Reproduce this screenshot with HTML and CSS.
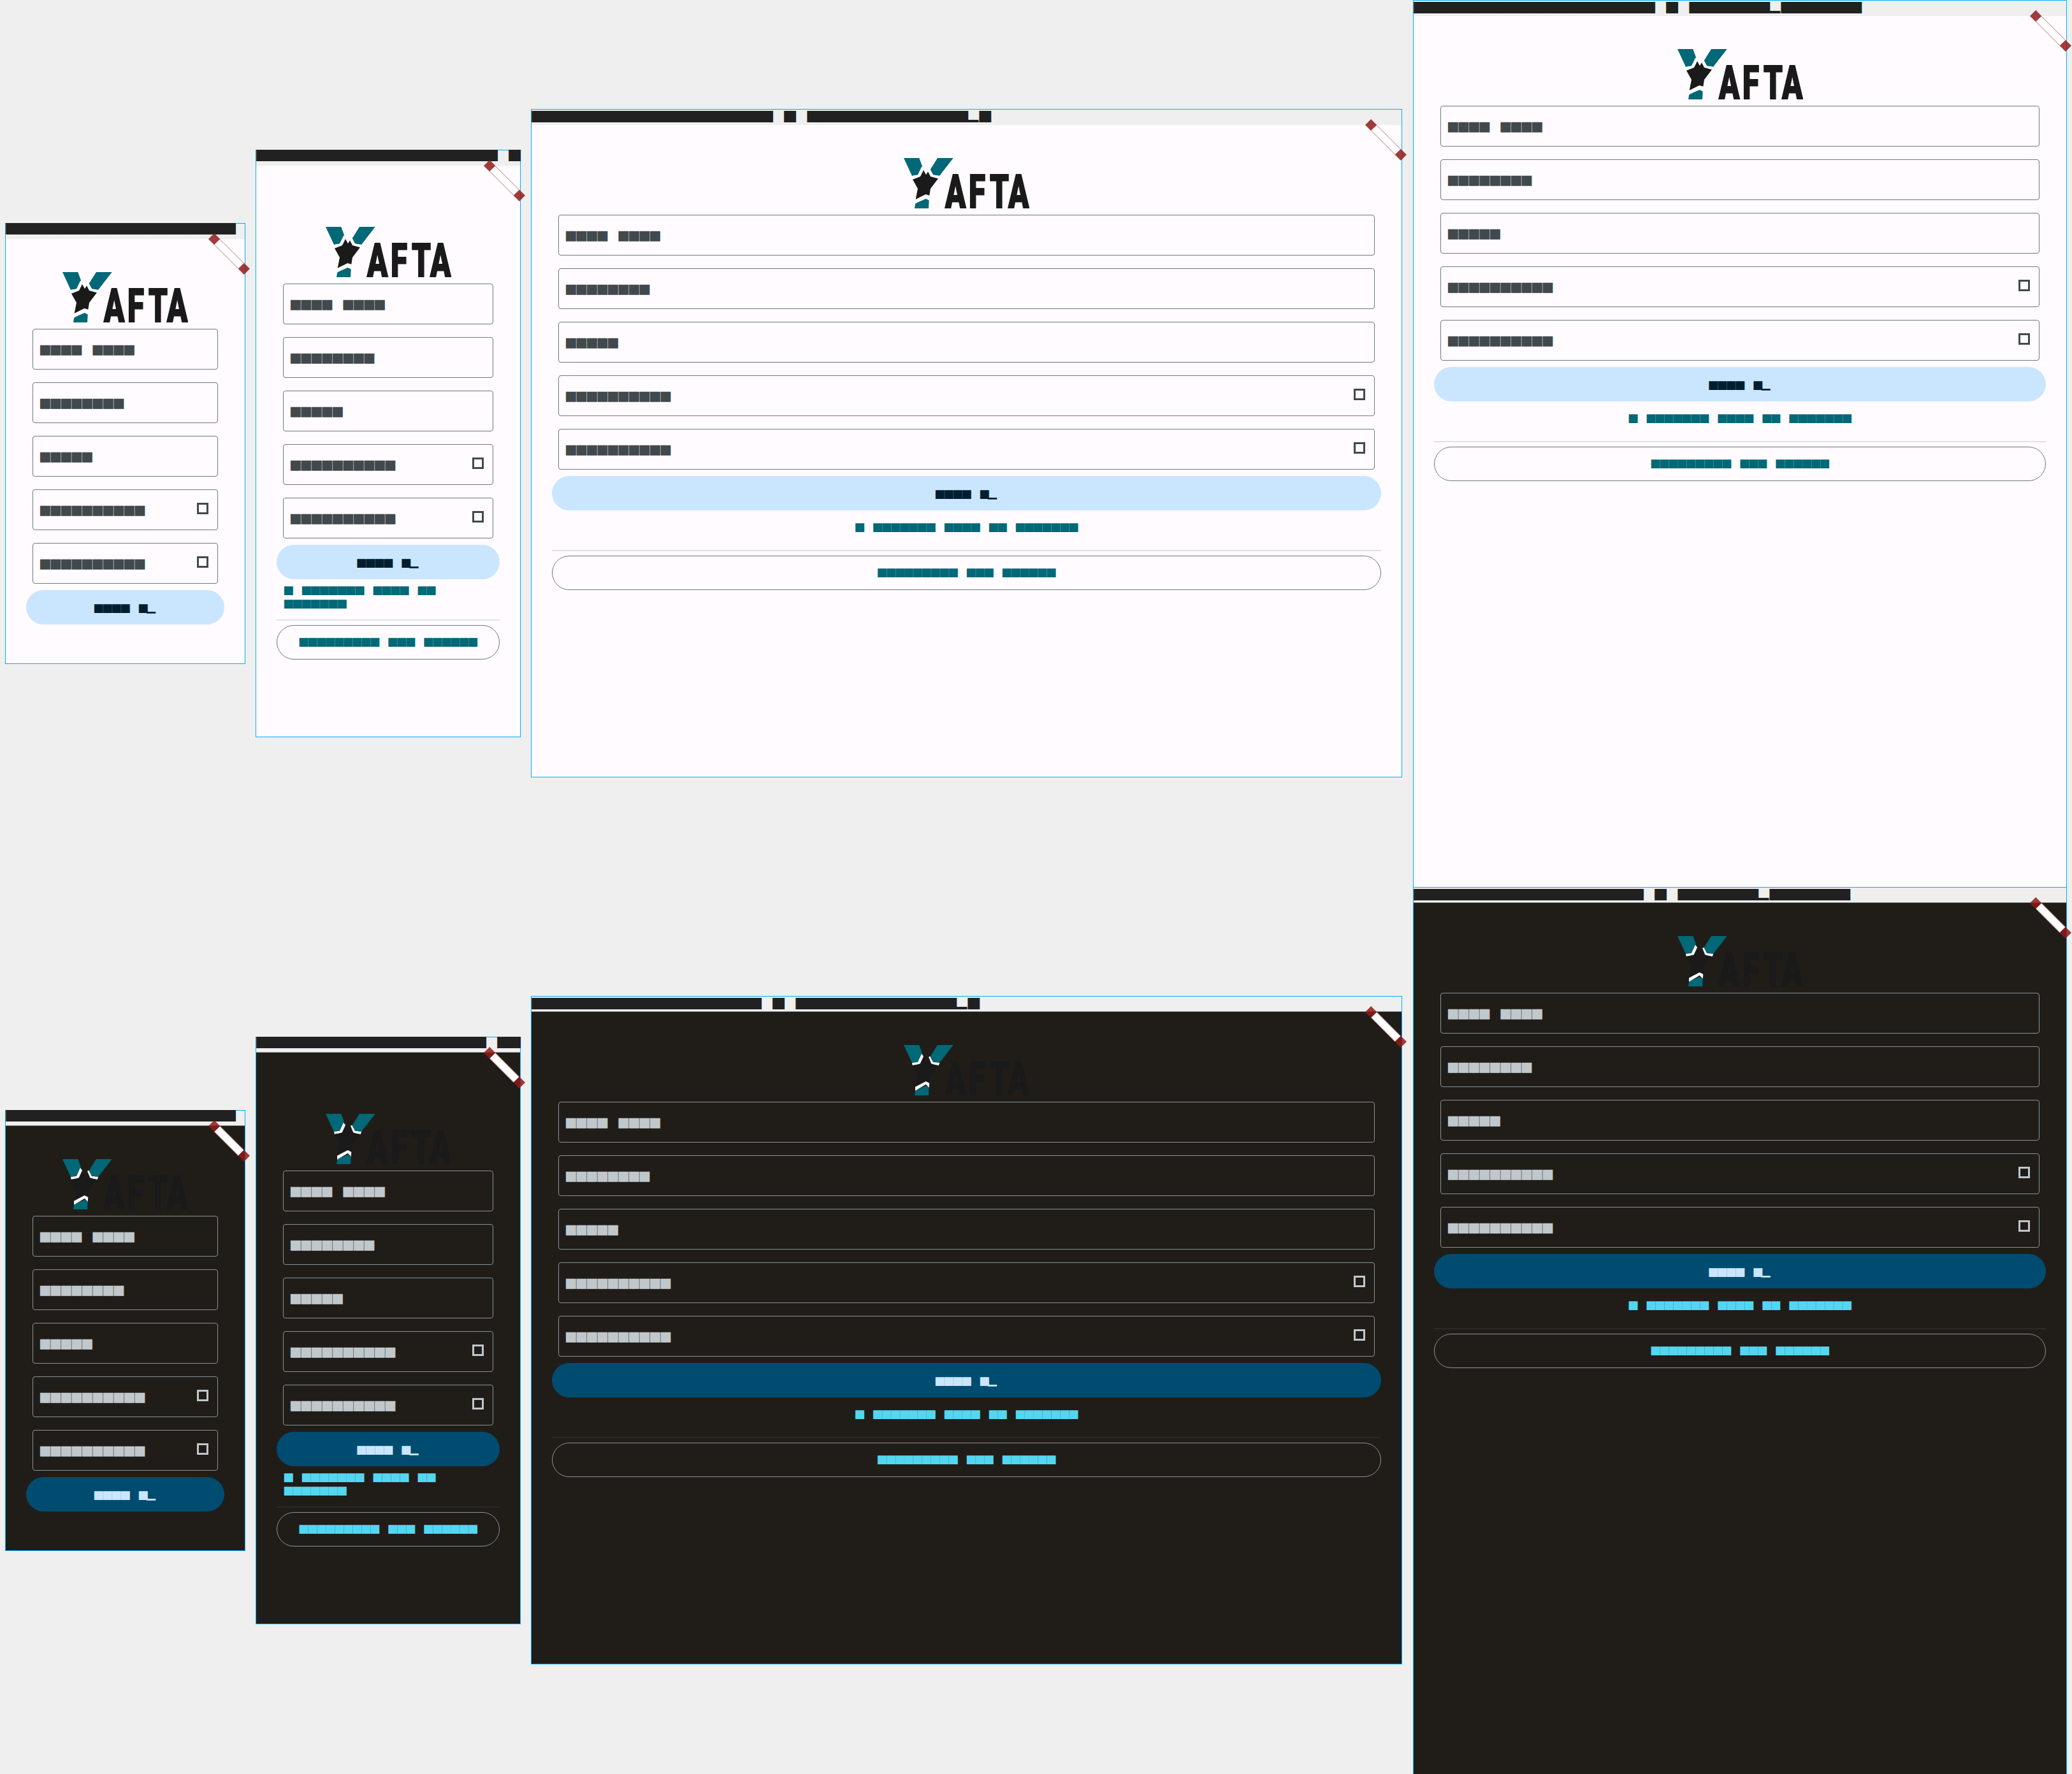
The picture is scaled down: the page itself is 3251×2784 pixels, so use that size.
FILE: index.html
```html
<!DOCTYPE html>
<html lang="en">
<head>
    <meta charset="UTF-8">
    <meta name="viewport" content="width=device-width, initial-scale=1.0">
    <title>Sign up</title>
    <link rel="stylesheet" href="styles.css">
</head>
<body>
    <svg class="sprite" aria-hidden="true">
        <symbol id="logo" viewBox="0 0 197 79">
            <polygon class="logo-teal" points="0,0 24.3,0 29,13 22.3,26.3 13,28"/>
            <polygon class="logo-teal" points="53,0 77.7,0 56,28 46,26.3 41.7,18"/>
            <polygon class="logo-teal" points="17,79 18.3,71 34.7,64 39.7,66.3 39,79"/>
            <polygon class="logo-cut" points="13,28 22,26.7 28,13.7 31,17.7 25.7,29.7 13.7,31.7"/>
            <polygon class="logo-cut" points="39,18.7 41.3,17.7 46,26.7 56.3,28 54.7,32 43.7,30.3"/>
            <polygon class="logo-cut" points="18,65.7 34.7,56.7 40.3,60 39.7,66.7 34.7,61.7 18,71.7"/>
            <polygon class="logo-ink" points="14,33.7 26,29 31,19 35,26.3 38,21.3 42,29 54,32.3 42,48 40.3,58.7 34.3,57 18.7,64.7 22,48"/>
            <text class="logo-word" transform="translate(65 78) scale(.66 1)" x="0 56 106 150" y="0">AFTA</text>
        </symbol>
    </svg>

    <!-- light row -->
    <section class="frame f1">
        <div class="strip"><span class="bar">■■■■■■■■■■■■■■■■■■■■</span></div>
        <span class="ruler"><i class="knob"></i><i class="ruler-mid"></i><i class="knob"></i></span>
        <div class="page">
            <svg class="logo"><use href="#logo"/></svg>
            <div class="field"><span class="tofu">■■■■ ■■■■</span></div>
            <div class="field"><span class="tofu">■■■■■■■■</span></div>
            <div class="field"><span class="tofu">■■■■■</span></div>
            <div class="field"><span class="tofu">■■■■■■■■■■</span><i class="box"></i></div>
            <div class="field"><span class="tofu">■■■■■■■■■■</span><i class="box"></i></div>
            <button class="btn-main"><span class="tofu-sm">■■■■ ■<span class="tail">▁</span></span></button>
        </div>
    </section>

    <section class="frame f2">
        <div class="strip"><span class="bar">■■■■■■■■■■■■■■■■■■■■■ ■</span></div>
        <span class="ruler"><i class="knob"></i><i class="ruler-mid"></i><i class="knob"></i></span>
        <div class="page">
            <svg class="logo"><use href="#logo"/></svg>
            <div class="field"><span class="tofu">■■■■ ■■■■</span></div>
            <div class="field"><span class="tofu">■■■■■■■■</span></div>
            <div class="field"><span class="tofu">■■■■■</span></div>
            <div class="field"><span class="tofu">■■■■■■■■■■</span><i class="box"></i></div>
            <div class="field"><span class="tofu">■■■■■■■■■■</span><i class="box"></i></div>
            <button class="btn-main"><span class="tofu-sm">■■■■ ■<span class="tail">▁</span></span></button>
            <p class="link"><span class="tofu-sm">■ ■■■■■■■ ■■■■ ■■ ■■■■■■■</span></p>
            <hr class="rule">
            <button class="btn-line"><span class="tofu-sm">■■■■■■■■■ ■■■ ■■■■■■</span></button>
        </div>
    </section>

    <section class="frame f3">
        <div class="strip"><span class="bar">■■■■■■■■■■■■■■■■■■■■■ ■ ■■■■■■■■■■■■■■<span class="tail">▁</span>■</span></div>
        <span class="ruler"><i class="knob"></i><i class="ruler-mid"></i><i class="knob"></i></span>
        <div class="page">
            <svg class="logo"><use href="#logo"/></svg>
            <div class="field"><span class="tofu">■■■■ ■■■■</span></div>
            <div class="field"><span class="tofu">■■■■■■■■</span></div>
            <div class="field"><span class="tofu">■■■■■</span></div>
            <div class="field"><span class="tofu">■■■■■■■■■■</span><i class="box"></i></div>
            <div class="field"><span class="tofu">■■■■■■■■■■</span><i class="box"></i></div>
            <button class="btn-main"><span class="tofu-sm">■■■■ ■<span class="tail">▁</span></span></button>
            <p class="link"><span class="tofu-sm">■ ■■■■■■■ ■■■■ ■■ ■■■■■■■</span></p>
            <hr class="rule">
            <button class="btn-line"><span class="tofu-sm">■■■■■■■■■ ■■■ ■■■■■■</span></button>
        </div>
    </section>

    <section class="frame f4">
        <div class="strip"><span class="bar">■■■■■■■■■■■■■■■■■■■■■ ■ ■■■■■■■<span class="tail">▁</span>■■■■■■■</span></div>
        <span class="ruler"><i class="knob"></i><i class="ruler-mid"></i><i class="knob"></i></span>
        <div class="page">
            <svg class="logo"><use href="#logo"/></svg>
            <div class="field"><span class="tofu">■■■■ ■■■■</span></div>
            <div class="field"><span class="tofu">■■■■■■■■</span></div>
            <div class="field"><span class="tofu">■■■■■</span></div>
            <div class="field"><span class="tofu">■■■■■■■■■■</span><i class="box"></i></div>
            <div class="field"><span class="tofu">■■■■■■■■■■</span><i class="box"></i></div>
            <button class="btn-main"><span class="tofu-sm">■■■■ ■<span class="tail">▁</span></span></button>
            <p class="link"><span class="tofu-sm">■ ■■■■■■■ ■■■■ ■■ ■■■■■■■</span></p>
            <hr class="rule">
            <button class="btn-line"><span class="tofu-sm">■■■■■■■■■ ■■■ ■■■■■■</span></button>
        </div>
    </section>

    <!-- dark row -->
    <section class="frame f1 dark">
        <div class="strip"><span class="bar">■■■■■■■■■■■■■■■■■■■■</span></div>
        <span class="ruler"><i class="knob"></i><i class="ruler-mid"></i><i class="knob"></i></span>
        <div class="page">
            <svg class="logo"><use href="#logo"/></svg>
            <div class="field"><span class="tofu">■■■■ ■■■■</span></div>
            <div class="field"><span class="tofu">■■■■■■■■</span></div>
            <div class="field"><span class="tofu">■■■■■</span></div>
            <div class="field"><span class="tofu">■■■■■■■■■■</span><i class="box"></i></div>
            <div class="field"><span class="tofu">■■■■■■■■■■</span><i class="box"></i></div>
            <button class="btn-main"><span class="tofu-sm">■■■■ ■<span class="tail">▁</span></span></button>
        </div>
    </section>

    <section class="frame f2 dark">
        <div class="strip"><span class="bar">■■■■■■■■■■■■■■■■■■■■ ■■</span></div>
        <span class="ruler"><i class="knob"></i><i class="ruler-mid"></i><i class="knob"></i></span>
        <div class="page">
            <svg class="logo"><use href="#logo"/></svg>
            <div class="field"><span class="tofu">■■■■ ■■■■</span></div>
            <div class="field"><span class="tofu">■■■■■■■■</span></div>
            <div class="field"><span class="tofu">■■■■■</span></div>
            <div class="field"><span class="tofu">■■■■■■■■■■</span><i class="box"></i></div>
            <div class="field"><span class="tofu">■■■■■■■■■■</span><i class="box"></i></div>
            <button class="btn-main"><span class="tofu-sm">■■■■ ■<span class="tail">▁</span></span></button>
            <p class="link"><span class="tofu-sm">■ ■■■■■■■ ■■■■ ■■ ■■■■■■■</span></p>
            <hr class="rule">
            <button class="btn-line"><span class="tofu-sm">■■■■■■■■■ ■■■ ■■■■■■</span></button>
        </div>
    </section>

    <section class="frame f3 dark">
        <div class="strip"><span class="bar">■■■■■■■■■■■■■■■■■■■■ ■ ■■■■■■■■■■■■■■<span class="tail">▁</span>■</span></div>
        <span class="ruler"><i class="knob"></i><i class="ruler-mid"></i><i class="knob"></i></span>
        <div class="page">
            <svg class="logo"><use href="#logo"/></svg>
            <div class="field"><span class="tofu">■■■■ ■■■■</span></div>
            <div class="field"><span class="tofu">■■■■■■■■</span></div>
            <div class="field"><span class="tofu">■■■■■</span></div>
            <div class="field"><span class="tofu">■■■■■■■■■■</span><i class="box"></i></div>
            <div class="field"><span class="tofu">■■■■■■■■■■</span><i class="box"></i></div>
            <button class="btn-main"><span class="tofu-sm">■■■■ ■<span class="tail">▁</span></span></button>
            <p class="link"><span class="tofu-sm">■ ■■■■■■■ ■■■■ ■■ ■■■■■■■</span></p>
            <hr class="rule">
            <button class="btn-line"><span class="tofu-sm">■■■■■■■■■ ■■■ ■■■■■■</span></button>
        </div>
    </section>

    <section class="frame f4 dark">
        <div class="strip"><span class="bar">■■■■■■■■■■■■■■■■■■■■ ■ ■■■■■■■<span class="tail">▁</span>■■■■■■■</span></div>
        <span class="ruler"><i class="knob"></i><i class="ruler-mid"></i><i class="knob"></i></span>
        <div class="page">
            <svg class="logo"><use href="#logo"/></svg>
            <div class="field"><span class="tofu">■■■■ ■■■■</span></div>
            <div class="field"><span class="tofu">■■■■■■■■</span></div>
            <div class="field"><span class="tofu">■■■■■</span></div>
            <div class="field"><span class="tofu">■■■■■■■■■■</span><i class="box"></i></div>
            <div class="field"><span class="tofu">■■■■■■■■■■</span><i class="box"></i></div>
            <button class="btn-main"><span class="tofu-sm">■■■■ ■<span class="tail">▁</span></span></button>
            <p class="link"><span class="tofu-sm">■ ■■■■■■■ ■■■■ ■■ ■■■■■■■</span></p>
            <hr class="rule">
            <button class="btn-line"><span class="tofu-sm">■■■■■■■■■ ■■■ ■■■■■■</span></button>
        </div>
    </section>
</body>
</html>
```

FILE: styles.css
```css
html, body {
    margin: 0;
    width: 3251px;
    height: 2784px;
    overflow: hidden;
    background-color: #eeefee;
}

body {
    position: relative;
    font-family: 'DejaVu Sans', sans-serif;
}

.sprite {
    position: absolute;
    width: 0;
    height: 0;
}

/* frames sit on a free canvas */
.frame {
    --surface: #fffbff;
    --text: #41494c;
    --outline: #70787c;
    --primary: #006877;
    --main-bg: #cae6ff;
    --main-text: #001e30;
    --rule: #e1e3e4;
    --strip-line: #ececec;
    position: absolute;
    box-sizing: border-box;
    border: 1px solid #00aeff;
    display: flex;
    flex-direction: column;
}

.frame.dark {
    --surface: #201d19;
    --text: #c0c8cc;
    --outline: #8a9296;
    --primary: #53d7f0;
    --main-bg: #004c71;
    --main-text: #cae6ff;
    --rule: #2b2926;
    --strip-line: #8b8b8b;
    margin-top: 1392px;
}

.f1 { left: 8px; top: 350px; width: 377px; height: 692px; }
.f2 { left: 401px; top: 235px; width: 416px; height: 922px; }
.f3 { left: 833px; top: 171px; width: 1367px; height: 1049px; }
.f4 { left: 2217px; top: 0; width: 1026px; height: 1393px; }

.strip {
    height: 24px;
    flex: none;
}

/* block glyphs: the square is .77em wide inside a wider advance */
.bar {
    display: block;
    margin: -3px 0 0 -2px;
    font-size: 23.4px;
    line-height: 18px;
    letter-spacing: -0.175em;
    word-spacing: 0.627em;
    white-space: nowrap;
    color: #212121;
    text-shadow: 1px 0 0 #212121;
}

.page {
    flex: 1;
    min-height: 0;
    padding: 52px 32px 0;
    background-color: var(--surface);
    border-top: 1px solid var(--strip-line);
    margin-top: -1px;
    display: flex;
    flex-direction: column;
}

.f2 .page {
    padding-top: 96px;
}

.logo {
    width: 197px;
    height: 79px;
    flex: none;
    align-self: center;
    margin-bottom: 10px;
}

.logo-teal { fill: #006877; }
.logo-cut { fill: #ffffff; }
.logo-ink { fill: #1a1a1a; }

.logo-word {
    fill: #1a1a1a;
    stroke: #1a1a1a;
    stroke-width: 2px;
    font-family: 'Roboto', sans-serif;
    font-weight: 900;
    font-size: 72px;
}

.field {
    box-sizing: border-box;
    height: 64px;
    flex: none;
    margin: 0 10px 20px;
    padding: 0 14px 0 9px;
    border: 1px solid var(--outline);
    border-radius: 4px;
    display: flex;
    align-items: center;
    justify-content: space-between;
}

.tofu {
    font-size: 20.8px;
    line-height: 16px;
    letter-spacing: -0.152em;
    word-spacing: 0.628em;
    color: var(--text);
}

.box {
    box-sizing: border-box;
    width: 18px;
    height: 18px;
    margin-bottom: 4px;
    border: 3px solid var(--text);
}

.tofu-sm {
    font-size: 18.2px;
    line-height: 14px;
    letter-spacing: -0.176em;
    word-spacing: 0.627em;
    color: var(--primary);
}

.tail {
    letter-spacing: 0;
    vertical-align: 0.11em;
}

.btn-main,
.btn-line {
    box-sizing: border-box;
    height: 54px;
    flex: none;
    border-radius: 27px;
    font-family: inherit;
    padding: 0 3px 0 0;
    display: flex;
    align-items: center;
    justify-content: center;
}

.btn-main {
    margin-top: -10px;
    border: none;
    background-color: var(--main-bg);
}

.btn-main .tofu-sm {
    color: var(--main-text);
}

.btn-line {
    margin-top: 7px;
    padding-bottom: 3px;
    border: 1px solid var(--outline);
    background-color: transparent;
}

.link {
    margin: 0;
    padding: 16px 15px 25px 12px;
    text-align: center;
    line-height: 20px;
}

.f2 .link {
    padding: 7px 10px 14px;
    text-align: left;
}

.link .tofu-sm {
    line-height: 20px;
}

.rule {
    width: 100%;
    height: 2px;
    flex: none;
    margin: 0;
    border: none;
    background-color: var(--rule);
}

/* corner ruler laid over the frame */
.ruler {
    position: absolute;
    top: 41px;
    right: -15px;
    width: 79px;
    height: 13px;
    display: flex;
    transform: rotate(45deg);
    z-index: 2;
}

.knob {
    width: 13px;
    flex: none;
    background-color: rgba(144, 26, 26, 0.85);
}

.ruler-mid {
    flex: 1;
    box-sizing: border-box;
    background-color: #ffffff;
    border-top: 1px solid rgba(144, 26, 26, 0.5);
    border-bottom: 1px solid rgba(144, 26, 26, 0.5);
}
```
